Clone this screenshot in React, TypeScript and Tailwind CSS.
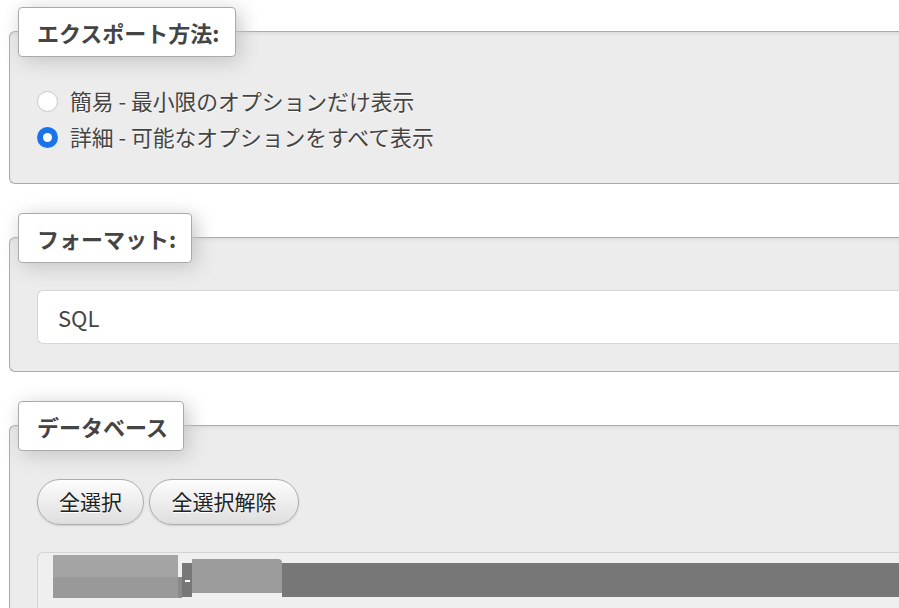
import React from "react";

const font = { fontFamily: '"Noto Sans CJK JP", "Noto Sans", sans-serif' };

function Legend({ children }: { children: React.ReactNode }) {
  return (
    <div className="relative z-10 -mt-[25px] ml-[8px] flex h-[50px] w-fit items-center rounded-[4px] border border-[#aaaaaa] bg-white pl-[18px] pr-[15px] text-[22px] font-bold text-[#444444] shadow-[4px_4px_20px_#c4c4c4]">
      {children}
    </div>
  );
}

function Fieldset({ children, legend, className }: { children: React.ReactNode; legend: string; className?: string }) {
  return (
    <div
      className={
        "flex flex-col rounded-tl-[6px] rounded-bl-[6px] border-y border-l border-[#aaaaaa] bg-[#ececec] shadow-[inset_0_3px_4px_-2px_#d6d6d6] " +
        (className ?? "")
      }
    >
      <Legend>{legend}</Legend>
      {children}
    </div>
  );
}

function Radio({ checked, label }: { checked?: boolean; label: string }) {
  return (
    <div className="flex h-[36px] items-center">
      {checked ? (
        <div className="flex h-[21px] w-[21px] items-center justify-center rounded-full bg-[#1a73e8]">
          <div className="h-[9px] w-[9px] rounded-full bg-white" />
        </div>
      ) : (
        <div className="h-[21px] w-[21px] rounded-full border border-[#c8c8c8] bg-white" />
      )}
      <span className="ml-[12px] text-[21.8px] text-[#444444] [text-shadow:0_1px_0_#fff]">{label}</span>
    </div>
  );
}

function Btn({ children, w }: { children: React.ReactNode; w: string }) {
  return (
    <div
      className={
        "flex h-[46px] items-center justify-center rounded-full border border-[#adadad] bg-gradient-to-b from-[#fdfdfd] to-[#dedede] text-[21px] text-[#222222] shadow-[0_1px_2px_#cfcfcf] [text-shadow:0_1px_0_#fff] " +
        w
      }
    >
      {children}
    </div>
  );
}

export default function App() {
  return (
    <div className="h-[608px] w-[899px] overflow-hidden bg-white pl-[9px] pt-[31px]" style={font}>
      <Fieldset legend="エクスポート方法:" className="h-[153px]">
        <div className="mt-[26px] flex flex-col pl-[27px]">
          <Radio label="簡易 - 最小限のオプションだけ表示" />
          <Radio checked label="詳細 - 可能なオプションをすべて表示" />
        </div>
      </Fieldset>

      <Fieldset legend="フォーマット:" className="mt-[53px] h-[135px]">
        <div className="ml-[27px] mt-[27px] flex h-[54px] items-center rounded-l-[6px] border-y border-l border-[#d6d6d6] bg-white pl-[20px] text-[22px] text-[#444444]">
          SQL
        </div>
      </Fieldset>

      <Fieldset legend="データベース" className="mt-[53px] h-[260px]">
        <div className="ml-[27px] mt-[28px] flex gap-[5px]">
          <Btn w="w-[107px]">全選択</Btn>
          <Btn w="w-[150px]">全選択解除</Btn>
        </div>
        <div className="ml-[27px] mt-[27px] h-[120px] rounded-tl-[6px] border-l border-t border-[#d4d4d4] bg-[#efefef] pl-[15px] pt-[2px]">
          <div className="flex h-[43px]">
            <div className="flex w-[125px] flex-col">
              <div className="h-[22px] bg-[#a4a4a4]" />
              <div className="h-[21px] bg-[#999999]" />
            </div>
            <div className="mt-[22px] h-[21px] w-[4px] bg-[#8a8a8a]" />
            <div className="relative mt-[8px] h-[34px] w-[10px] bg-[#777777]">
              <div className="absolute left-[3px] top-[17px] h-[2px] w-[5px] bg-white" />
            </div>
            <div className="mt-[4px] h-[34px] w-[90px] rounded-tr-[4px] bg-[#9b9b9b]" />
            <div className="mt-[8px] h-[34px] flex-1 bg-[#777777]" />
          </div>
        </div>
      </Fieldset>
    </div>
  );
}
